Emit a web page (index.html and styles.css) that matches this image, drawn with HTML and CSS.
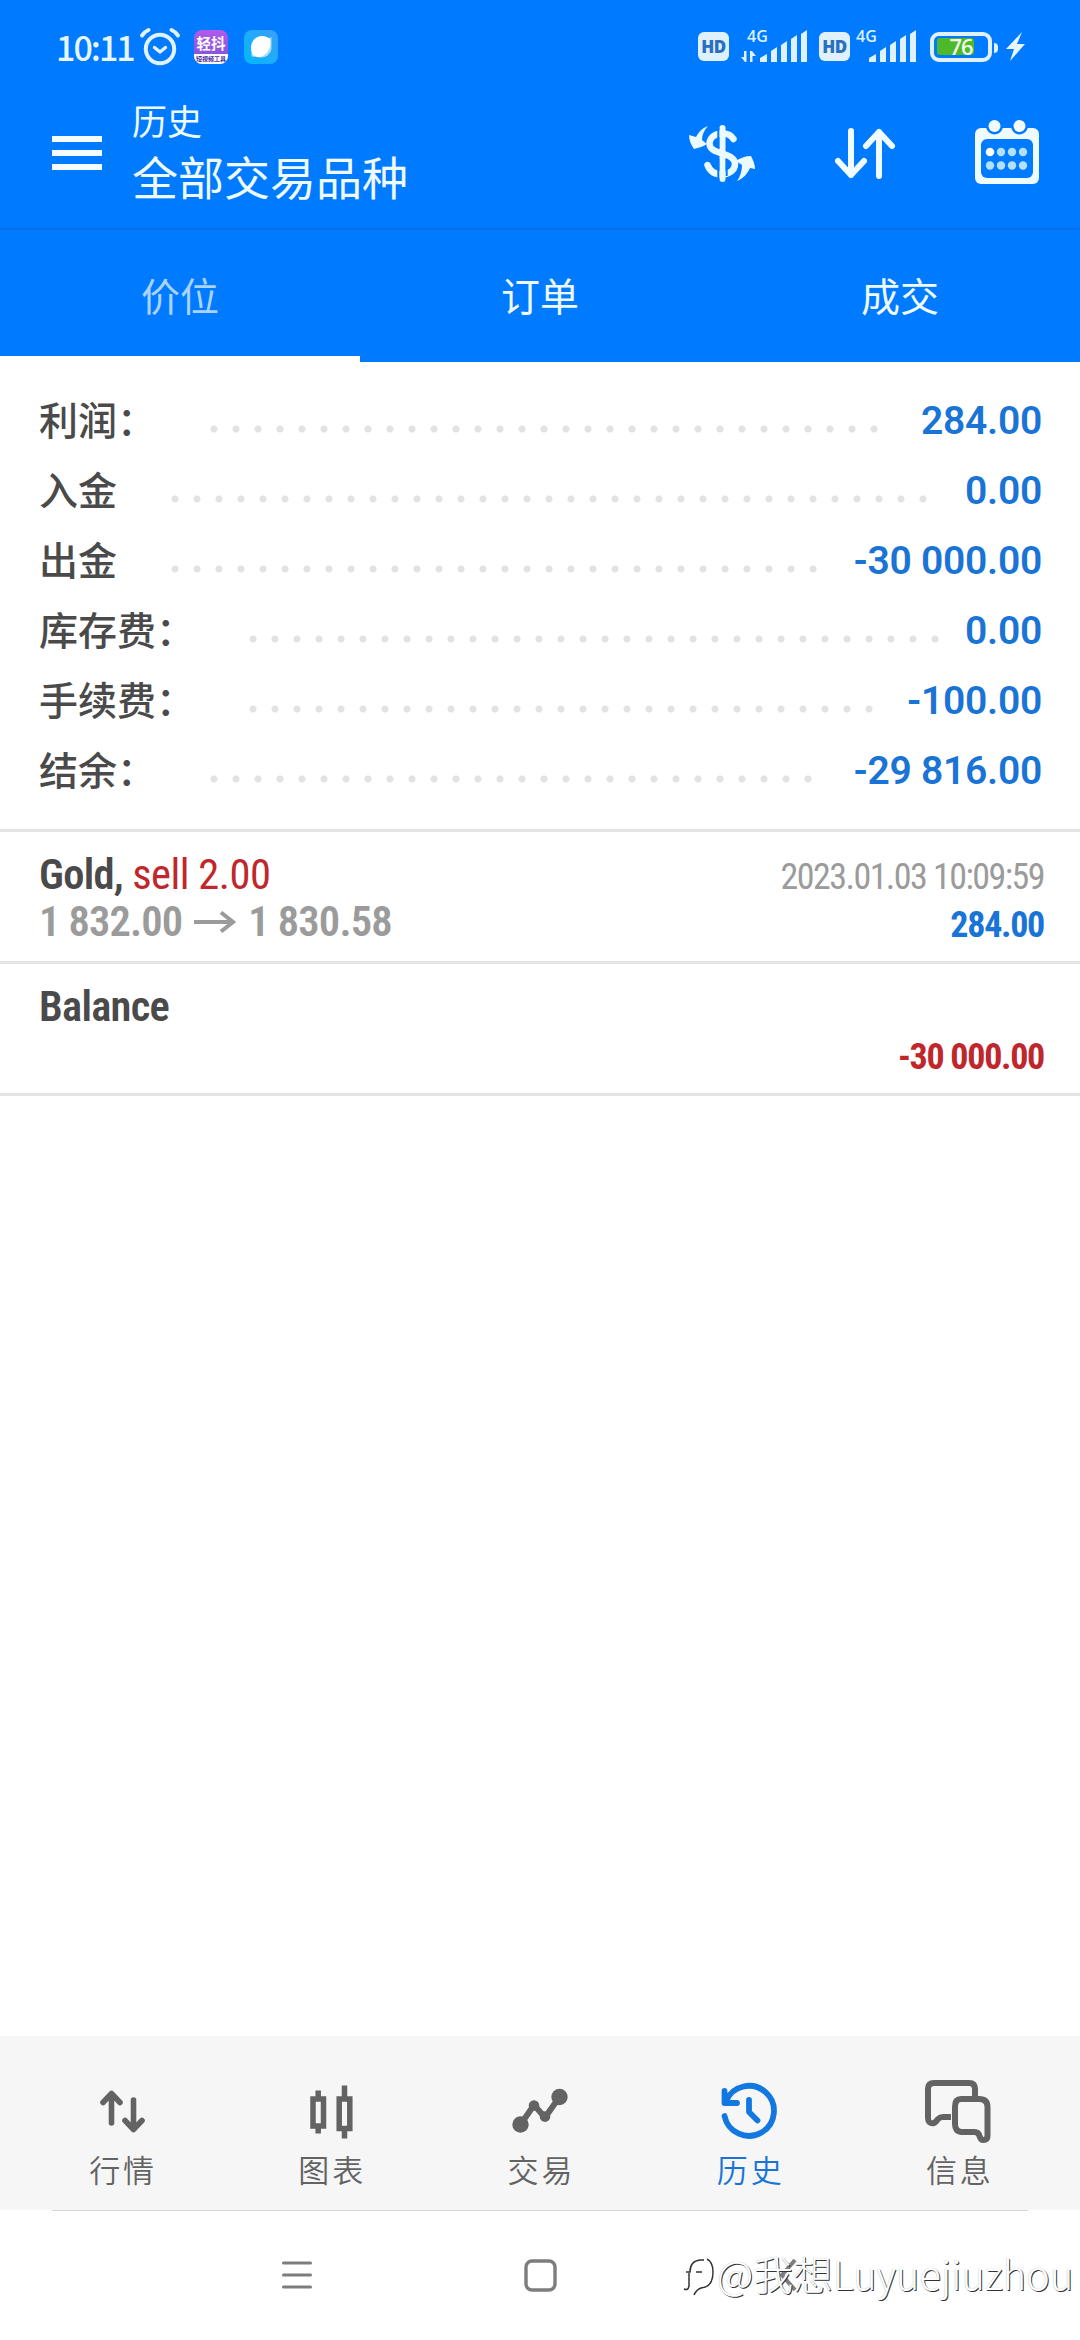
FILE: index.html
```html
<!DOCTYPE html>
<html lang="zh-CN">
<head>
<meta charset="utf-8">
<title>历史</title>
<link rel="stylesheet" href="styles.css">
</head>
<body>
<div class="screen">
  <header class="top">
    <div class="status">
      <span class="clock">10:11</span>
      <svg class="alarm" width="42" height="40" viewBox="0 0 42 40" fill="none" stroke="#dff3ff" stroke-linecap="round">
        <circle cx="21" cy="22" r="14.2" stroke-width="4"/>
        <path d="M15.5 20.5l5.5 4.5 5.5-4.5" stroke-width="3.4" stroke-linejoin="round"/>
        <path d="M3 8.5Q6 4.500 9.500 3M39 8.500Q36 4.500 32.500 3" stroke-width="4"/>
      </svg>
      <span class="app app-dou"><b>轻抖</b><i>短视频工具</i></span>
      <svg class="app-leaf" width="34" height="34" viewBox="0 0 34 34">
        <defs><linearGradient id="leaf" x1="0" y1="1" x2="1" y2="0"><stop offset="0" stop-color="#00b9fb"/><stop offset="1" stop-color="#3e9dfb"/></linearGradient></defs>
        <rect width="34" height="34" rx="8" fill="url(#leaf)"/>
        <path d="M27.500 7v12a10.500 10 0 0 1-11 8.500l-9-1V16z" fill="#a9dcfb"/>
        <path d="M7 18C7 11 12 6 18 6c3 0 6 1 8 3 2 7-2 17-11 18-2 0-4-1-6-2-1-2-2-4-2-7z" fill="#fff"/>
      </svg>
      <div class="signals">
        <span class="hd">HD</span>
        <svg class="sig1" width="68" height="40" viewBox="0 -4 68 40" fill="#dff1ff">
          <text class="net" x="6" y="14">4G</text>
          <path d="M5.500 23v11h-1.500L0 29h3v-6zM9 34V23h2l4 5h-3.500v6z"/>
          <path d="M19 34v-4l7-4v8zM30 34V23l6-4v15zM40 34V17l6-4v21zM50 34V11l6-4v27zM60 34V6l6-4v32z"/>
        </svg>
        <span class="hd hd2">HD</span>
        <svg class="sig2" width="62" height="40" viewBox="0 -4 62 40" fill="#dff1ff">
          <text class="net" x="0" y="14">4G</text>
          <path d="M13 34v-4l7-4v8zM24 34V23l6-4v15zM34 34V17l6-4v21zM44 34V11l6-4v27zM54 34V6l6-4v32z"/>
        </svg>
        <svg class="bat" width="98" height="32" viewBox="0 0 98 32">
          <rect x="2" y="3" width="58" height="26" rx="7" fill="none" stroke="#dff1ff" stroke-width="4"/>
          <rect x="7" y="7" width="37" height="17" rx="3" fill="#4db82a"/>
          <path d="M64 12q4 0 4 4v2q0 4-4 4z" fill="#dff1ff"/>
          <text class="pct" x="31" y="24" text-anchor="middle">76</text>
          <path d="M92 1L76 18h8l-4 12 15-17h-8z" fill="#e8f6ff"/>
        </svg>
      </div>
    </div>
    <div class="bar">
      <svg class="menu" width="50" height="34" viewBox="0 0 50 34" fill="#f4fcff"><path d="M0 0h50v6H0zM0 14h50v6H0zM0 28h50v6H0z"/></svg>
      <div class="titles">
        <div class="t1">历史</div>
        <div class="t2">全部交易品种</div>
      </div>
      <svg class="ic-usd" width="70" height="60" viewBox="0 0 70 60" fill="none" stroke="#eafaff">
        <path d="M34.500 5v51" stroke-width="6" stroke-linecap="round"/>
        <path d="M45.500 16C42 10 37 10.500 34 10.500c-8 0-12.500 5-12.500 10 0 12 25.500 8 25.500 20.500 0 6-6 10.500-13 10.500-7 0-12-3-14.500-9.500" stroke-width="6.500" stroke-linecap="round"/>
        <path d="M30.300 5v20M30.300 36v21M38.700 36v17" stroke="#007aff" stroke-width="2"/>
        <path d="M20 3C14 5 10 10 8 14L1 12c0 5 2 10 5 14 5-1 10-3 13-5l-5-4c0-5 2-10 6-14zM49 58c6-2 11-8 13-13l5 1c0-5-2-9-4-13-6 0-11 2-15 5l6 4c0 6-2 12-5 16z" fill="#eafaff" stroke="none"/>
      </svg>
      <svg class="ic-sort" width="62" height="52" viewBox="0 0 62 52" fill="none" stroke="#f0fbff" stroke-width="6" stroke-linecap="round" stroke-linejoin="round"><path d="M17 3v44M4 33l13 14 13-14M45 48V4M32 18L45 4l13 14"/></svg>
      <svg class="ic-cal" width="64" height="64" viewBox="0 0 64 64">
        <rect x="0" y="8" width="64" height="56" rx="6" fill="#eefbff"/>
        <rect x="6" y="19" width="52" height="39" rx="6" fill="#007aff"/>
        <circle cx="19.500" cy="6" r="8.500" fill="#007aff"/><circle cx="44.500" cy="6" r="8.500" fill="#007aff"/>
        <circle cx="19.500" cy="6" r="6" fill="#f2fcff"/><circle cx="44.500" cy="6" r="6" fill="#f2fcff"/>
        <circle cx="15" cy="32" r="4.300" fill="#fff"/>
        <g fill="#b4e0ff"><circle cx="26" cy="32" r="4.200"/><circle cx="37" cy="32" r="4.200"/><circle cx="48" cy="32" r="4.200"/><circle cx="15" cy="45.500" r="4.200"/><circle cx="26" cy="45.500" r="4.200"/><circle cx="37" cy="45.500" r="4.200"/><circle cx="48" cy="45.500" r="4.200"/></g>
      </svg>
    </div>
    <nav class="tabs">
      <span class="tab active">价位</span><span class="tab">订单</span><span class="tab">成交</span>
    </nav>
  </header>

  <section class="summary">
    <div class="row"><span class="label">利润：</span><span class="dots" style="width:682px"></span><span class="value">284.00</span></div>
    <div class="row"><span class="label">入金</span><span class="dots" style="width:770px"></span><span class="value">0.00</span></div>
    <div class="row"><span class="label">出金</span><span class="dots" style="width:660px"></span><span class="value">-30 000.00</span></div>
    <div class="row"><span class="label">库存费：</span><span class="dots" style="width:704px"></span><span class="value">0.00</span></div>
    <div class="row"><span class="label">手续费：</span><span class="dots" style="width:638px"></span><span class="value">-100.00</span></div>
    <div class="row"><span class="label">结余：</span><span class="dots" style="width:616px"></span><span class="value">-29 816.00</span></div>
  </section>

  <main class="deals">
    <div class="deal">
      <div class="left">
        <div class="sym">Gold, <span class="sell">sell 2.00</span></div>
        <div class="price">1 832.00<svg width="42" height="22" viewBox="0 0 42 22" fill="none" stroke="#9b9b9b" stroke-width="4"><path d="M0 11h39M27 1.500L39 11 27 20.500"/></svg>1 830.58</div>
      </div>
      <div class="right"><div class="date">2023.01.03 10:09:59</div><div class="profit">284.00</div></div>
    </div>
    <div class="deal">
      <div class="left"><div class="sym">Balance</div></div>
      <div class="right"><div class="date">&nbsp;</div><div class="profit loss">-30 000.00</div></div>
    </div>
  </main>

  <nav class="bottom">
    <div class="item"><svg width="68" height="68" viewBox="0 0 68 68" fill="none" stroke="#636363" stroke-width="5.600" stroke-linecap="round" stroke-linejoin="round"><path d="M23.500 46V17M15 25.500L23.500 16.500l8.500 9M45.500 23v29M37 43.500L45.500 52.500l8.500-9"/></svg><span>行情</span></div>
    <div class="item"><svg width="68" height="68" viewBox="0 0 68 68" fill="none" stroke="#636363" stroke-width="5.500"><path d="M16 22h10.500v27H16zM21.200 13.500v8M21.200 49.500v7M42.200 22h10.600v29.500H42.200zM47.500 8.500v13M47.500 51.500v10"/></svg><span>图表</span></div>
    <div class="item"><svg width="68" height="68" viewBox="0 0 68 68" fill="#636363"><path d="M14.500 47.500L28 28l11 12.500L53.500 20" fill="none" stroke="#636363" stroke-width="6"/><circle cx="14.500" cy="47.500" r="8.200"/><circle cx="28" cy="28.500" r="5.300"/><circle cx="39" cy="39.500" r="5.300"/><circle cx="53.500" cy="20" r="8.200"/></svg><span>交易</span></div>
    <div class="item on"><svg width="68" height="68" viewBox="0 0 68 68" fill="none" stroke="#1277e1" stroke-width="5.800" stroke-linecap="round" stroke-linejoin="round"><path d="M9.500 39A25 25 0 1 0 11 24M9.500 14v12H22M34 23v12l8.500 8.500"/></svg><span>历史</span></div>
    <div class="item"><svg width="68" height="68" viewBox="0 0 68 68" fill="none" stroke="#636363" stroke-width="6" stroke-linejoin="round"><path d="M51 19V12q0-6-6-6H10q-6 0-6 6v29q0 6 6 5 2-1 4-4 2-2 5-2h8"/><path d="M37 22h18q8.500 0 8.500 8v29q0 4-4 4-3 0-4-4-1-4-5-4H37q-6-1-6-8V30q0-8 6-8z"/></svg><span>信息</span></div>
  </nav>
  <footer class="sys">
    <svg class="s1" width="30" height="28" viewBox="0 0 30 28" stroke="#7d7d7d" stroke-width="3" stroke-linecap="round"><path d="M1.500 2h27M1.500 14h27M1.500 26h27"/></svg>
    <svg class="s2" width="33" height="33" viewBox="0 0 33 33" fill="none" stroke="#7d7d7d" stroke-width="3.400"><rect x="2" y="2" width="29" height="29" rx="6"/></svg>
    <svg class="s3" width="18" height="34" viewBox="0 0 18 34" fill="none" stroke="#7d7d7d" stroke-width="4"><path d="M16 2L3 17l13 15"/></svg>
    <div class="mark">
      <svg width="34" height="44" viewBox="0 0 34 44" fill="none" stroke="#333" stroke-width="1.500"><path d="M2 35q4 2 5-3v-13M4 18h4q0-11 10-12h4M14 18h6M25 5q6 3 6 13 0 15-12 16-5 2-7 7"/></svg>
      <span>@我想Luyuejiuzhou</span>
    </div>
  </footer>
</div>
</body>
</html>
```
FILE: styles.css
```css
* { box-sizing: border-box; }
body { margin: 0; background: #fff; font-family: Roboto, "Noto Sans CJK SC", sans-serif; }
svg { display: block; flex: none; }
.screen { width: 1080px; height: 2340px; display: flex; flex-direction: column; overflow: hidden; }

.top { background: #007aff; color: #eefaff; height: 362px; flex: none; display: flex; flex-direction: column; }
.status { height: 92px; display: flex; align-items: flex-start; padding: 28px 52px 0 56px; }
.clock { width: 83px; margin-top: -1px; font: 500 34px/39px "Noto Sans CJK SC", sans-serif; letter-spacing: -2px; white-space: nowrap; color: #e6f6ff; }
.alarm { margin-top: -1px; }
.app { width: 34px; height: 34px; margin: 2px 16px 0 13px; border-radius: 8px; overflow: hidden; background: linear-gradient(#b05be8, #7b52d8); display: flex; flex-direction: column; align-items: center; }
.app b { height: 24px; font: 700 14.5px/26px "Noto Sans CJK SC", sans-serif; color: #fff; }
.app i { width: 34px; height: 10px; background: #fff; color: #4a2f9c; font: 700 6px/9px "Noto Sans CJK SC", sans-serif; text-align: center; white-space: nowrap; }
.app-leaf { margin-top: 2px; }
.signals { margin-left: auto; display: flex; align-items: flex-start; }
.hd { width: 31px; height: 29px; margin-top: 4px; border-radius: 6px; background: #dff1ff; color: #2a6fc0; font: 800 17px/29px "Open Sans", sans-serif; text-align: center; letter-spacing: -.5px; }
.sig1 { margin: -4px 0 0 12px; }
.hd2 { margin-left: 10px; }
.sig2 { margin: -4px 0 0 6px; }
.bat { margin: 3px 0 0 12px; }
.net { font: 600 16px "Open Sans", sans-serif; }
.pct { font: 600 22px "Open Sans", sans-serif; fill: #f2fbe8; letter-spacing: -1px; }

.bar { height: 138px; border-bottom: 2px solid #0571ea; display: flex; align-items: flex-start; padding: 0 41px 0 52px; }
.menu { margin-top: 44px; }
.titles { margin: 10px auto 0 30px; }
.t1 { font-size: 35px; line-height: 44px; }
.t2 { font-size: 46px; line-height: 62px; margin-top: 2px; }
.ic-usd { margin: 31px 76px 0 0; }
.ic-sort { margin: 36px 79px 0 0; }
.ic-cal { margin-top: 28px; }
.tabs { height: 132px; display: grid; grid-template-columns: repeat(3, 1fr); }
.tab { text-align: center; font-size: 39px; line-height: 128px; height: 132px; padding-top: 4px; }
.active { color: #a9d3fb; border-bottom: 6px solid #fff; }

.summary { height: 470px; flex: none; padding: 22px 38px 0 39px; border-bottom: 3px solid #e4e4e4; }
.row { height: 70px; display: flex; align-items: center; }
.label { font-size: 39px; line-height: 64px; padding-top: 6px; font-weight: 500; color: #4a4a4a; margin-right: 46.500px; }
.dots { height: 8px; margin-top: 19px; background: radial-gradient(circle at 50% 50%, #e2e2e2 3px, transparent 4px) 0 0 / 22px 8px repeat-x; }
.value { margin-left: auto; margin-top: 4px; font-size: 39px; font-weight: 600; letter-spacing: -.25px; color: #1a74d6; white-space: nowrap; }

.deals { flex: 1; font-family: "Roboto Condensed", Roboto, sans-serif; }
.deal { height: 132px; display: flex; justify-content: space-between; padding: 18px 36px 0 39px; border-bottom: 3px solid #e4e4e4; }
.sym, .price { font-size: 42.500px; line-height: 48px; font-weight: 600; letter-spacing: -.7px; color: #4a4a4a; white-space: nowrap; }
.sym { height: 48px; line-height: 50px; }
.sell { font-weight: 400; letter-spacing: -.5px; color: #c0272d; }
.price { display: flex; align-items: center; gap: 12px; letter-spacing: -.85px; color: #9b9b9b; }
.right { text-align: right; }
.date { font-size: 36px; line-height: 54px; height: 48px; letter-spacing: -1.550px; color: #9b9b9b; white-space: nowrap; }
.profit { font-size: 36px; line-height: 54px; font-weight: 700; letter-spacing: -1.300px; color: #1a74d6; }
.loss { color: #c0272d; }

.bottom { height: 174px; flex: none; background: #f6f6f6; display: flex; justify-content: center; padding-top: 41px; }
.item { width: 209.200px; display: flex; flex-direction: column; align-items: center; color: #636363; }
.item span { font-size: 31px; line-height: 44px; margin-top: 5px; letter-spacing: 3px; padding-left: 3px; font-weight: 350; }
.item.on span { color: #1a74d6; }
.sys { height: 130px; flex: none; position: relative; display: flex; align-items: flex-start; padding: 0 52px; }
.sys::before { content: ""; position: absolute; left: 52px; right: 52px; top: 0; height: 1px; background: #d8d8d8; }
.s1 { margin: 51px 0 0 230px; }
.s2 { margin: 49px 0 0 212px; }
.s3 { margin: 48px 0 0 222px; }
.mark { position: absolute; left: 682px; top: 37px; display: flex; align-items: center; }
.mark svg { margin: 6px 1px 0 0; }
.mark span { font: 300 39.800px/52px "Noto Sans CJK SC", sans-serif; color: #fff; text-shadow: 1px 1px 0 #333, 0 0 1px #aaa; white-space: nowrap; }
```
